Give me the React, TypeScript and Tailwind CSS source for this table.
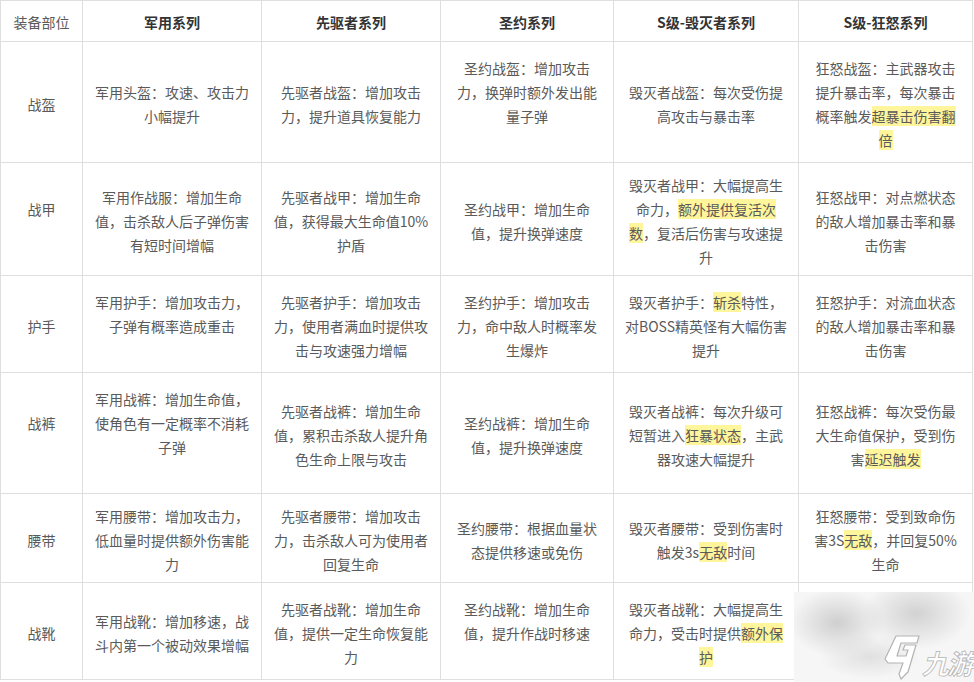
import React from "react"

// a line is a list of segments; [text, true] marks a highlighted segment
type Seg = string | [string, boolean]
type Line = Seg[]

const hl = (t: string): Seg => [t, true]

const headers = ["装备部位", "军用系列", "先驱者系列", "圣约系列", "S级-毁灭者系列", "S级-狂怒系列"]

const rows: { label: Line[]; cells: Line[][] }[] = [
  {
    label: [["战盔"]],
    cells: [
      [["军用头盔：攻速、攻击力"], ["小幅提升"]],
      [["先驱者战盔：增加攻击"], ["力，提升道具恢复能力"]],
      [["圣约战盔：增加攻击"], ["力，换弹时额外发出能"], ["量子弹"], []],
      [["毁灭者战盔：每次受伤提"], ["高攻击与暴击率"]],
      [["狂怒战盔：主武器攻击"], ["提升暴击率，每次暴击"], ["概率触发", hl("超暴击伤害翻")], [hl("倍")]],
    ],
  },
  {
    label: [["战甲"], []],
    cells: [
      [["军用作战服：增加生命"], ["值，击杀敌人后子弹伤害"], ["有短时间增幅"]],
      [["先驱者战甲：增加生命"], ["值，获得最大生命值10%"], ["护盾"]],
      [["圣约战甲：增加生命"], ["值，提升换弹速度"]],
      [["毁灭者战甲：大幅提高生"], ["命力，", hl("额外提供复活次")], [hl("数"), "，复活后伤害与攻速提"], ["升"]],
      [["狂怒战甲：对点燃状态"], ["的敌人增加暴击率和暴"], ["击伤害"]],
    ],
  },
  {
    label: [["护手"]],
    cells: [
      [["军用护手：增加攻击力，"], ["子弹有概率造成重击"], []],
      [["先驱者护手：增加攻击"], ["力，使用者满血时提供攻"], ["击与攻速强力增幅"]],
      [["圣约护手：增加攻击"], ["力，命中敌人时概率发"], ["生爆炸"]],
      [["毁灭者护手：", hl("斩杀"), "特性，"], ["对BOSS精英怪有大幅伤害"], ["提升"]],
      [["狂怒护手：对流血状态"], ["的敌人增加暴击率和暴"], ["击伤害"]],
    ],
  },
  {
    label: [["战裤"], []],
    cells: [
      [["军用战裤：增加生命值，"], ["使角色有一定概率不消耗"], ["子弹"], []],
      [["先驱者战裤：增加生命"], ["值，累积击杀敌人提升角"], ["色生命上限与攻击"]],
      [["圣约战裤：增加生命"], ["值，提升换弹速度"]],
      [["毁灭者战裤：每次升级可"], ["短暂进入", hl("狂暴状态"), "，主武"], ["器攻速大幅提升"]],
      [["狂怒战裤：每次受伤最"], ["大生命值保护，受到伤"], ["害", hl("延迟触发")]],
    ],
  },
  {
    label: [["腰带"]],
    cells: [
      [["军用腰带：增加攻击力，"], ["低血量时提供额外伤害能"], ["力"]],
      [["先驱者腰带：增加攻击"], ["力，击杀敌人可为使用者"], ["回复生命"]],
      [["圣约腰带：根据血量状"], ["态提供移速或免伤"]],
      [["毁灭者腰带：受到伤害时"], ["触发3s", hl("无敌"), "时间"]],
      [["狂怒腰带：受到致命伤"], ["害3S", hl("无敌"), "，并回复50%"], ["生命"]],
    ],
  },
  {
    label: [["战靴"]],
    cells: [
      [["军用战靴：增加移速，战"], ["斗内第一个被动效果增幅"]],
      [["先驱者战靴：增加生命"], ["值，提供一定生命恢复能"], ["力"]],
      [["圣约战靴：增加生命"], ["值，提升作战时移速"], []],
      [["毁灭者战靴：大幅提高生"], ["命力，受击时提供", hl("额外保")], [hl("护")]],
      [],
    ],
  },
]

function Cell({ lines }: { lines: Line[] }) {
  return (
    <div className="bg-white flex flex-col items-center justify-center pt-[3px] text-center text-[14px] leading-[24px] text-[#5a5a5a]">
      {lines.map((line, i) => (
        <div key={i} className="whitespace-nowrap h-[24px]">
          {line.map((seg, j) =>
            typeof seg === "string" ? (
              <span key={j}>{seg}</span>
            ) : (
              <span key={j} className="bg-[#fff59a]">{seg[0]}</span>
            )
          )}
        </div>
      ))}
    </div>
  )
}

// site watermark lying over the bottom-right corner of the table
function Watermark() {
  return (
    <div className="absolute right-0 bottom-0 w-[180px] h-[90px] flex items-end justify-end gap-[2px] pr-[2px] pb-[1px] bg-[#f6f6f6] [background-image:radial-gradient(ellipse_48px_34px_at_24%_34%,#cfcfcf,transparent),radial-gradient(ellipse_54px_36px_at_68%_24%,#d2d2d2,transparent),radial-gradient(ellipse_50px_22px_at_42%_72%,#e0e0e0,transparent)]">
      <svg width="36" height="46" viewBox="0 0 36 46" className="mb-[1px]">
        <path
          d="M12 2 L35 2 L33 9 L17 9 L13 22 L22 22 L24 16 L19 16 L21 11 L32 11 L24 38 L17 45 L15 40 L19 29 L4 29 L1 25 Z"
          fill="#ffffff"
          stroke="#b3b3b3"
          strokeWidth="1.2"
          strokeLinejoin="round"
        />
      </svg>
      <div className="text-[27px] leading-[36px] font-bold italic text-white tracking-[-2px] [-webkit-text-stroke:0.8px_#b5b5b5]">
        九游
      </div>
    </div>
  )
}

export default function App() {
  return (
    <div className="relative w-[974px] h-[682px] bg-white [font-family:'Noto_Sans_CJK_SC','Noto_Sans',sans-serif]">
      <div className="grid grid-cols-[81px_178px_178px_172px_184px_173px] grid-rows-[40px_120px_112px_96px_120px_88px_96px] gap-px p-px bg-[#dfdfdf] w-[973px]">
        {headers.map((h, i) => (
          <div
            key={h}
            className={
              "bg-white flex items-center justify-center pt-[3px] text-[14px] " +
              (i === 0 ? "text-[#5a5a5a]" : "font-bold text-[#333]")
            }
          >
            {h}
          </div>
        ))}
        {rows.map((r, ri) => (
          <React.Fragment key={ri}>
            <Cell lines={r.label} />
            {r.cells.map((c, ci) => (
              <Cell key={ci} lines={c} />
            ))}
          </React.Fragment>
        ))}
      </div>
      <Watermark />
    </div>
  )
}
